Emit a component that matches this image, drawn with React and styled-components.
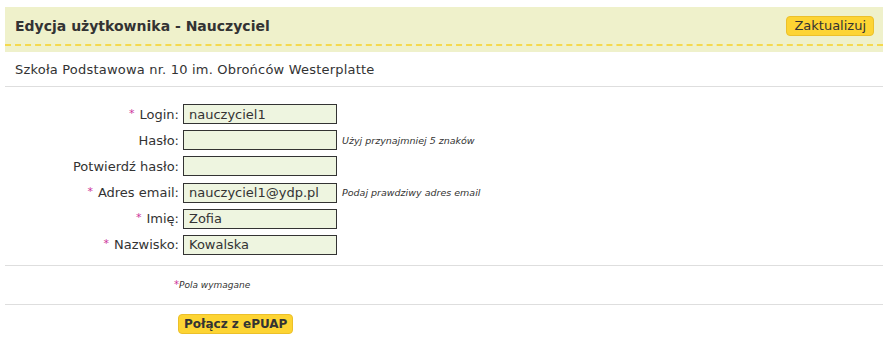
import React from 'react';
import styled, { createGlobalStyle } from 'styled-components';

const GlobalStyle = createGlobalStyle`
  body {
    margin: 0;
    background: #fff;
    font-family: Verdana, "DejaVu Sans", sans-serif;
    color: #333;
  }
`;

const Page = styled.div`
  padding: 7px 5px 0 5px;
`;

// header band with the dashed yellow underline
const HeaderBand = styled.div`
  background: #eff1cb;
  padding: 0 0 6px 0;
`;

const HeaderRow = styled.div`
  display: flex;
  align-items: center;
  justify-content: space-between;
  height: 37px;
  padding: 0 9px 0 10px;
  border-bottom: 2px dashed #f5d94e;
`;

const Title = styled.h2`
  margin: 0;
  font-size: 14px;
  font-weight: bold;
  color: #333;
`;

const YellowButton = styled.button`
  font-family: Verdana, "DejaVu Sans", sans-serif;
  font-size: ${p => (p.$bold ? '12px' : '13px')};
  font-weight: ${p => (p.$bold ? 'bold' : 'normal')};
  color: #333;
  background: #fdd433;
  border: 1px solid #ecc02a;
  border-radius: 4px;
  height: 20px;
  padding: 0 ${p => (p.$bold ? '5px' : '7px')};
  line-height: 18px;
  cursor: pointer;
`;

const School = styled.div`
  font-size: 13px;
  letter-spacing: 0.2px;
  padding: 0 10px;
  height: 34px;
  display: flex;
  align-items: center;
  border-bottom: 1px solid #dedede;
`;

const Form = styled.div`
  display: grid;
  grid-template-columns: 174px 154px auto;
  column-gap: 4px;
  row-gap: 6.2px;
  padding: 17px 0 10px 0;
  border-bottom: 1px solid #dedede;
  align-items: center;
`;

const Label = styled.label`
  font-size: 13px;
  text-align: right;
  color: #333;
`;

const Star = styled.span`
  color: #cc3399;
  font-size: ${p => (p.$small ? '10px' : '11px')};
  margin-right: ${p => (p.$small ? '0' : '5px')};
  vertical-align: ${p => (p.$small ? '1px' : '2px')};
`;

const Input = styled.input`
  box-sizing: border-box;
  width: 154px;
  height: 20px;
  border: 1px solid #333;
  background: #eef5e0;
  font-family: Verdana, "DejaVu Sans", sans-serif;
  font-size: 13px;
  color: #333;
  padding: 0 5px;
  margin: 0;
  outline: none;
`;

const Hint = styled.span`
  font-size: 9.5px;
  font-style: italic;
  color: #333;
  padding-left: 1px;
`;

const Required = styled.div`
  font-size: 9px;
  font-style: italic;
  padding: 0 0 0 169px;
  height: 38px;
  display: flex;
  align-items: center;
  border-bottom: 1px solid #dedede;
`;

const Footer = styled.div`
  padding: 8px 0 0 173px;
`;

const fields = [
  { label: 'Login', value: 'nauczyciel1', req: true },
  { label: 'Hasło', value: '', hint: 'Użyj przynajmniej 5 znaków' },
  { label: 'Potwierdź hasło', value: '' },
  { label: 'Adres email', value: 'nauczyciel1@ydp.pl', req: true, hint: 'Podaj prawdziwy adres email' },
  { label: 'Imię', value: 'Zofia', req: true },
  { label: 'Nazwisko', value: 'Kowalska', req: true },
];

export default function App() {
  return (
    <Page>
      <GlobalStyle />
      <HeaderBand>
        <HeaderRow>
          <Title>Edycja użytkownika - Nauczyciel</Title>
          <YellowButton>Zaktualizuj</YellowButton>
        </HeaderRow>
      </HeaderBand>
      <School>Szkoła Podstawowa nr. 10 im. Obrońców Westerplatte</School>
      <Form>
        {fields.map(f => (
          <React.Fragment key={f.label}>
            <Label>
              {f.req && <Star>*</Star>}
              {f.label}:
            </Label>
            <Input
              type={f.label.includes('asło') ? 'password' : 'text'}
              defaultValue={f.value}
            />
            <Hint>{f.hint || ''}</Hint>
          </React.Fragment>
        ))}
      </Form>
      <Required>
        <Star $small>*</Star>Pola wymagane
      </Required>
      <Footer>
        <YellowButton $bold>Połącz z ePUAP</YellowButton>
      </Footer>
    </Page>
  );
}
